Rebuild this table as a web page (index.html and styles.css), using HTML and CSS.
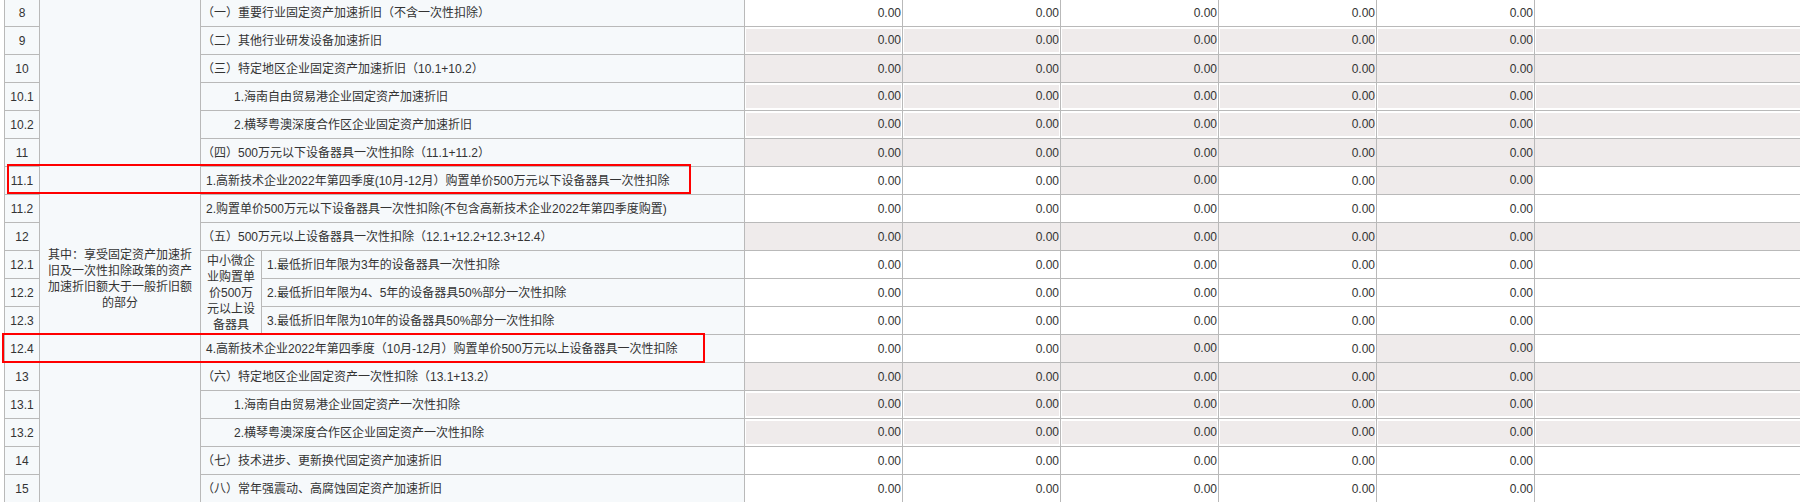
FILE: index.html
```html
<!DOCTYPE html>
<html lang="zh-CN">
<head>
<meta charset="utf-8">
<title>资产折旧、摊销及纳税调整明细表</title>
<link rel="stylesheet" href="styles.css">
</head>
<body>
<div class="page">
  <table class="form">
    <colgroup>
      <col class="c-no"><col class="c-cat"><col class="c-sub"><col class="c-item">
      <col class="c-num"><col class="c-num"><col class="c-num"><col class="c-num"><col class="c-num">
      <col class="c-last">
    </colgroup>
    <tbody>
      <tr>
        <td class="no">8</td>
        <td class="cat" rowspan="18">其中：享受固定资产加速折旧及一次性扣除政策的资产加速折旧额大于一般折旧额的部分</td>
        <td class="item lead" colspan="2">（一）重要行业固定资产加速折旧（不含一次性扣除）</td>
        <td class="num">0.00</td><td class="num">0.00</td><td class="num">0.00</td><td class="num">0.00</td><td class="num">0.00</td><td class="num"></td>
      </tr>
      <tr>
        <td class="no">9</td>
        <td class="item lead" colspan="2">（二）其他行业研发设备加速折旧</td>
        <td class="num in"><div class="box">0.00</div></td><td class="num in"><div class="box">0.00</div></td><td class="num in"><div class="box">0.00</div></td><td class="num in"><div class="box">0.00</div></td><td class="num in"><div class="box">0.00</div></td><td class="num in"><div class="box"></div></td>
      </tr>
      <tr>
        <td class="no">10</td>
        <td class="item lead" colspan="2">（三）特定地区企业固定资产加速折旧（10.1+10.2）</td>
        <td class="num ro">0.00</td><td class="num ro">0.00</td><td class="num ro">0.00</td><td class="num ro">0.00</td><td class="num ro">0.00</td><td class="num ro"></td>
      </tr>
      <tr>
        <td class="no">10.1</td>
        <td class="item sub-item" colspan="2">1.海南自由贸易港企业固定资产加速折旧</td>
        <td class="num in"><div class="box">0.00</div></td><td class="num in"><div class="box">0.00</div></td><td class="num in"><div class="box">0.00</div></td><td class="num in"><div class="box">0.00</div></td><td class="num in"><div class="box">0.00</div></td><td class="num in"><div class="box"></div></td>
      </tr>
      <tr>
        <td class="no">10.2</td>
        <td class="item sub-item" colspan="2">2.横琴粤澳深度合作区企业固定资产加速折旧</td>
        <td class="num in"><div class="box">0.00</div></td><td class="num in"><div class="box">0.00</div></td><td class="num in"><div class="box">0.00</div></td><td class="num in"><div class="box">0.00</div></td><td class="num in"><div class="box">0.00</div></td><td class="num in"><div class="box"></div></td>
      </tr>
      <tr>
        <td class="no">11</td>
        <td class="item lead" colspan="2">（四）500万元以下设备器具一次性扣除（11.1+11.2）</td>
        <td class="num ro">0.00</td><td class="num ro">0.00</td><td class="num ro">0.00</td><td class="num ro">0.00</td><td class="num ro">0.00</td><td class="num ro"></td>
      </tr>
      <tr>
        <td class="no">11.1</td>
        <td class="item" colspan="2">1.高新技术企业2022年第四季度(10月-12月）购置单价500万元以下设备器具一次性扣除</td>
        <td class="num">0.00</td><td class="num">0.00</td><td class="num ro up">0.00</td><td class="num">0.00</td><td class="num ro up">0.00</td><td class="num"></td>
      </tr>
      <tr>
        <td class="no">11.2</td>
        <td class="item" colspan="2">2.购置单价500万元以下设备器具一次性扣除(不包含高新技术企业2022年第四季度购置)</td>
        <td class="num">0.00</td><td class="num">0.00</td><td class="num">0.00</td><td class="num">0.00</td><td class="num">0.00</td><td class="num"></td>
      </tr>
      <tr>
        <td class="no">12</td>
        <td class="item lead" colspan="2">（五）500万元以上设备器具一次性扣除（12.1+12.2+12.3+12.4）</td>
        <td class="num ro">0.00</td><td class="num ro">0.00</td><td class="num ro">0.00</td><td class="num ro">0.00</td><td class="num ro">0.00</td><td class="num ro"></td>
      </tr>
      <tr>
        <td class="no">12.1</td>
        <td class="sub" rowspan="3">中小微企业购置单价500万元以上设备器具</td>
        <td class="item">1.最低折旧年限为3年的设备器具一次性扣除</td>
        <td class="num">0.00</td><td class="num">0.00</td><td class="num">0.00</td><td class="num">0.00</td><td class="num">0.00</td><td class="num"></td>
      </tr>
      <tr>
        <td class="no">12.2</td>
        <td class="item">2.最低折旧年限为4、5年的设备器具50%部分一次性扣除</td>
        <td class="num">0.00</td><td class="num">0.00</td><td class="num">0.00</td><td class="num">0.00</td><td class="num">0.00</td><td class="num"></td>
      </tr>
      <tr>
        <td class="no">12.3</td>
        <td class="item">3.最低折旧年限为10年的设备器具50%部分一次性扣除</td>
        <td class="num">0.00</td><td class="num">0.00</td><td class="num">0.00</td><td class="num">0.00</td><td class="num">0.00</td><td class="num"></td>
      </tr>
      <tr>
        <td class="no">12.4</td>
        <td class="item" colspan="2">4.高新技术企业2022年第四季度（10月-12月）购置单价500万元以上设备器具一次性扣除</td>
        <td class="num">0.00</td><td class="num">0.00</td><td class="num ro up">0.00</td><td class="num">0.00</td><td class="num ro up">0.00</td><td class="num"></td>
      </tr>
      <tr>
        <td class="no">13</td>
        <td class="item lead" colspan="2">（六）特定地区企业固定资产一次性扣除（13.1+13.2）</td>
        <td class="num ro">0.00</td><td class="num ro">0.00</td><td class="num ro">0.00</td><td class="num ro">0.00</td><td class="num ro">0.00</td><td class="num ro"></td>
      </tr>
      <tr>
        <td class="no">13.1</td>
        <td class="item sub-item" colspan="2">1.海南自由贸易港企业固定资产一次性扣除</td>
        <td class="num in"><div class="box">0.00</div></td><td class="num in"><div class="box">0.00</div></td><td class="num in"><div class="box">0.00</div></td><td class="num in"><div class="box">0.00</div></td><td class="num in"><div class="box">0.00</div></td><td class="num in"><div class="box"></div></td>
      </tr>
      <tr>
        <td class="no">13.2</td>
        <td class="item sub-item" colspan="2">2.横琴粤澳深度合作区企业固定资产一次性扣除</td>
        <td class="num in"><div class="box">0.00</div></td><td class="num in"><div class="box">0.00</div></td><td class="num in"><div class="box">0.00</div></td><td class="num in"><div class="box">0.00</div></td><td class="num in"><div class="box">0.00</div></td><td class="num in"><div class="box"></div></td>
      </tr>
      <tr>
        <td class="no">14</td>
        <td class="item lead" colspan="2">（七）技术进步、更新换代固定资产加速折旧</td>
        <td class="num">0.00</td><td class="num">0.00</td><td class="num">0.00</td><td class="num">0.00</td><td class="num">0.00</td><td class="num"></td>
      </tr>
      <tr>
        <td class="no">15</td>
        <td class="item lead" colspan="2">（八）常年强震动、高腐蚀固定资产加速折旧</td>
        <td class="num">0.00</td><td class="num">0.00</td><td class="num">0.00</td><td class="num">0.00</td><td class="num">0.00</td><td class="num"></td>
      </tr>
    </tbody>
  </table>
  <div class="mark mark-a"></div>
  <div class="mark mark-b"></div>
</div>
</body>
</html>
```

FILE: styles.css
```css
html, body {
  margin: 0;
  padding: 0;
  overflow: hidden;
  background: #fff;
}

.page {
  position: relative;
  width: 1800px;
  height: 502px;
  overflow: hidden;
  font-family: "Liberation Sans", "Noto Sans CJK SC", sans-serif;
  font-size: 12px;
  color: #333;
}

.form {
  margin: -2px 0 0 4px;
  border-collapse: collapse;
  table-layout: fixed;
  width: 1830px;
}

.c-no { width: 35px; }
.c-cat { width: 161px; }
.c-sub { width: 61px; }
.c-item { width: 483px; }
.c-num { width: 158px; }
.c-last { width: 300px; }

.form td {
  border: 1px solid #b9b9b9;
  height: 27px;
  padding: 0;
  line-height: 16px;
  vertical-align: middle;
  white-space: nowrap;
  overflow: hidden;
}

.form .no {
  background: #f6f9fb;
  text-align: center;
}

.form .cat {
  background: #f6f9fb;
  text-align: center;
  white-space: normal;
  padding: 56px 8px 0;
}

.form .sub {
  background: #f6f9fb;
  text-align: center;
  white-space: normal;
  padding: 0 4px;
}

.form .item {
  background: #f6f9fb;
  padding-left: 5px;
  letter-spacing: 0;
}

.form .lead {
  padding-left: 1px;
}

.form .sub-item {
  padding-left: 33px;
}

.form .num {
  background: #fff;
  text-align: right;
  padding-right: 1px;
}

.form .ro {
  background: #efebeb;
}

.form .up {
  height: 25px;
  padding-bottom: 2px;
}

.form .in {
  height: 23px;
  padding: 2px 1px 2px 1px;
}

.form .box {
  height: 23px;
  line-height: 23px;
  background: #efebeb;
}

.mark {
  position: absolute;
  border: 2px solid #f00;
  box-sizing: border-box;
}

.mark-a {
  left: 7px;
  top: 164px;
  width: 684px;
  height: 30px;
}

.mark-b {
  left: 2px;
  top: 333px;
  width: 703px;
  height: 30px;
}
```
